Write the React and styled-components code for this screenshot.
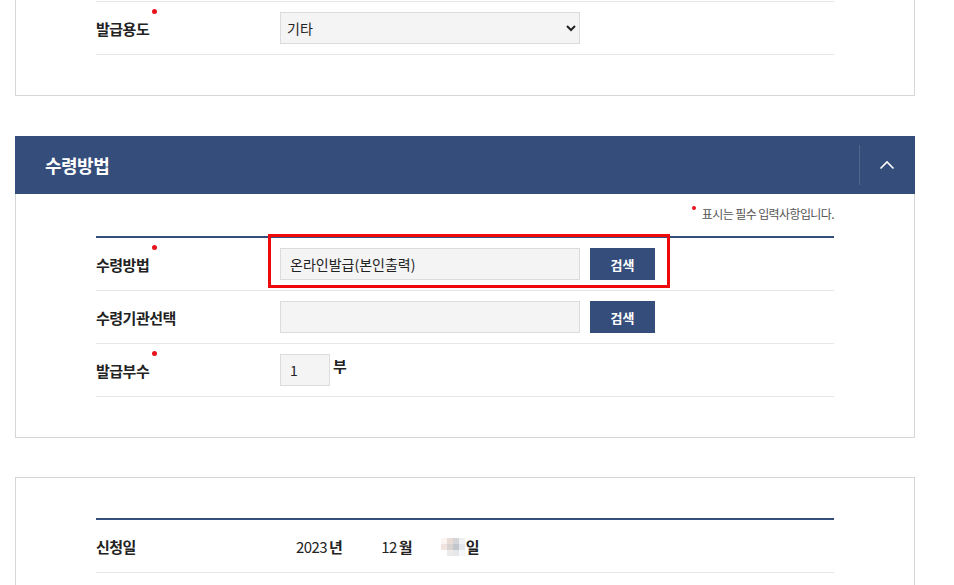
import styled, { createGlobalStyle } from "styled-components";

const GlobalStyle = createGlobalStyle`
  body {
    margin: 0;
    background: #fff;
    font-family: "Noto Sans CJK KR", "Noto Sans", sans-serif;
    color: #222;
  }
`;

const Page = styled.div`
  width: 900px;
  padding-left: 15px;
`;

const Panel = styled.section`
  border: 1px solid #d6d6d6;
  border-top: ${(props) => (props.cut ? "none" : "1px solid #d6d6d6")};
  margin-bottom: ${(props) => props.after || 40}px;
  background: #fff;
`;

const PanelHead = styled.div`
  display: flex;
  align-items: center;
  justify-content: space-between;
  height: 58px;
  margin: -1px -1px 0;
  background: #354d7b;
  padding-left: 30px;
`;

const PanelTitle = styled.h2`
  margin: 0;
  color: #fff;
  font-size: 18px;
  font-weight: 700;
  letter-spacing: -0.5px;
`;

const Toggle = styled.button`
  display: flex;
  align-items: center;
  justify-content: center;
  width: 56px;
  height: 40px;
  border: 0;
  border-left: 1px solid rgba(255, 255, 255, 0.14);
  background: transparent;
  padding: 0 2px 0 0;
  cursor: pointer;
`;

const PanelBody = styled.div`
  padding: ${(props) => props.pad || "0"} 80px 40px;
`;

const Note = styled.p`
  margin: 0;
  padding: 11px 0 13px;
  text-align: right;
  font-size: 12px;
  line-height: 18px;
  color: #555;
  letter-spacing: -0.6px;
`;

const NoteDot = styled.span`
  display: inline-block;
  width: 4px;
  height: 4px;
  border-radius: 50%;
  background: #e8131b;
  vertical-align: top;
  margin: 1px 6px 0 0;
`;

const Table = styled.div`
  border-top: ${(props) => (props.thin ? "1px solid #e6e6e6" : "2px solid #354d7b")};
`;

const Row = styled.div`
  display: flex;
  align-items: center;
  min-height: 32px;
  padding: 10px 0;
  border-bottom: 1px solid #e6e6e6;
`;

const Label = styled.div`
  width: 184px;
  flex-shrink: 0;
  font-size: 15px;
  font-weight: 700;
  letter-spacing: -0.5px;
  color: #222;
  line-height: 20px;
  padding-top: 2px;
`;

const LabelText = styled.span`
  position: relative;
  ${(props) =>
    props.required &&
    `
    &::after {
      content: "";
      position: absolute;
      top: -9px;
      right: -8px;
      width: 5px;
      height: 5px;
      border-radius: 50%;
      background: #e8131b;
    }
  `}
`;

const Field = styled.div`
  display: flex;
  align-items: center;
  gap: 10px;
`;

const Highlight = styled.div`
  position: relative;
  display: flex;
  align-items: center;
  gap: 10px;

  &::before {
    content: "";
    position: absolute;
    top: -14px;
    bottom: -8px;
    left: -12px;
    right: -15px;
    border: 3px solid #ee0a0a;
    pointer-events: none;
  }
`;

const Input = styled.input`
  box-sizing: border-box;
  width: ${(props) => props.w || 300}px;
  height: 32px;
  border: 1px solid #dcdcdc;
  background: #f4f4f4;
  padding: 0 9px;
  font-family: inherit;
  font-size: 14px;
  color: #222;
  outline: 0;
`;

const Select = styled.select`
  box-sizing: border-box;
  width: 300px;
  height: 32px;
  border: 1px solid #dcdcdc;
  border-radius: 0;
  background: #f4f4f4;
  padding: 0 2px;
  font-family: inherit;
  font-size: 14px;
  color: #222;
`;

const SearchButton = styled.button`
  width: 65px;
  height: 32px;
  border: 0;
  background: #354d7b;
  color: #fff;
  font-family: inherit;
  font-size: 13px;
  font-weight: 700;
  cursor: pointer;
`;

const Unit = styled.span`
  font-size: 15px;
  font-weight: 700;
  align-self: flex-start;
  margin-left: -7px;
  line-height: 24px;
`;

const DateLine = styled.div`
  display: flex;
  align-items: center;
  font-size: 15px;
  line-height: 20px;
  padding-top: 2px;
`;

const DatePart = styled.span`
  display: inline-flex;
  justify-content: flex-end;
  width: ${(props) => props.w}px;
  letter-spacing: -0.6px;
`;

const DateUnit = styled.span`
  font-weight: 700;
  margin-left: 2px;
`;

const Blur = styled.span`
  display: inline-grid;
  grid-template-columns: repeat(4, 6px);
  grid-template-rows: repeat(3, 6px);
  margin: 0 -1px 0 ${(props) => props.gap}px;
`;

const Pixel = styled.span`
  background: ${(props) => props.c};
`;

const blurColors = [
  "#fbf5f1", "#e9dcd6", "#d5d5d8", "#eef0f3",
  "#f1e4de", "#d8d2d1", "#c3c6cd", "#e3e7ed",
  "#ffffff", "#eceaea", "#e6e7ea", "#f6f7f9",
];

function Chevron() {
  return (
    <svg width="16" height="10" viewBox="0 0 16 10" fill="none">
      <path d="M1.5 8.5L8 2L14.5 8.5" stroke="#fff" strokeWidth="1.6" />
    </svg>
  );
}

export default function App() {
  return (
    <Page>
      <GlobalStyle />
      <Panel cut>
        <PanelBody pad="1px">
          <Table thin>
            <Row>
              <Label>
                <LabelText required>발급용도</LabelText>
              </Label>
              <Select defaultValue="기타">
                <option>기타</option>
              </Select>
            </Row>
          </Table>
        </PanelBody>
      </Panel>

      <Panel after={39}>
        <PanelHead>
          <PanelTitle>수령방법</PanelTitle>
          <Toggle aria-label="접기">
            <Chevron />
          </Toggle>
        </PanelHead>
        <PanelBody>
          <Note>
            <NoteDot />
            표시는 필수 입력사항입니다.
          </Note>
          <Table>
            <Row>
              <Label>
                <LabelText required>수령방법</LabelText>
              </Label>
              <Highlight>
                <Input readOnly value="온라인발급(본인출력)" />
                <SearchButton>검색</SearchButton>
              </Highlight>
            </Row>
            <Row>
              <Label>
                <LabelText>수령기관선택</LabelText>
              </Label>
              <Field>
                <Input readOnly value="" />
                <SearchButton>검색</SearchButton>
              </Field>
            </Row>
            <Row>
              <Label>
                <LabelText required>발급부수</LabelText>
              </Label>
              <Field>
                <Input w={50} readOnly value="1" />
                <Unit>부</Unit>
              </Field>
            </Row>
          </Table>
        </PanelBody>
      </Panel>

      <Panel>
        <PanelBody pad="40px">
          <Table>
            <Row>
              <Label>
                <LabelText>신청일</LabelText>
              </Label>
              <DateLine>
                <DatePart w={47}>2023</DatePart>
                <DateUnit>년</DateUnit>
                <DatePart w={54}>12</DatePart>
                <DateUnit>월</DateUnit>
                <Blur gap={28}>
                  {blurColors.map((c, i) => (
                    <Pixel key={i} c={c} />
                  ))}
                </Blur>
                <DateUnit>일</DateUnit>
              </DateLine>
            </Row>
          </Table>
        </PanelBody>
      </Panel>
    </Page>
  );
}
